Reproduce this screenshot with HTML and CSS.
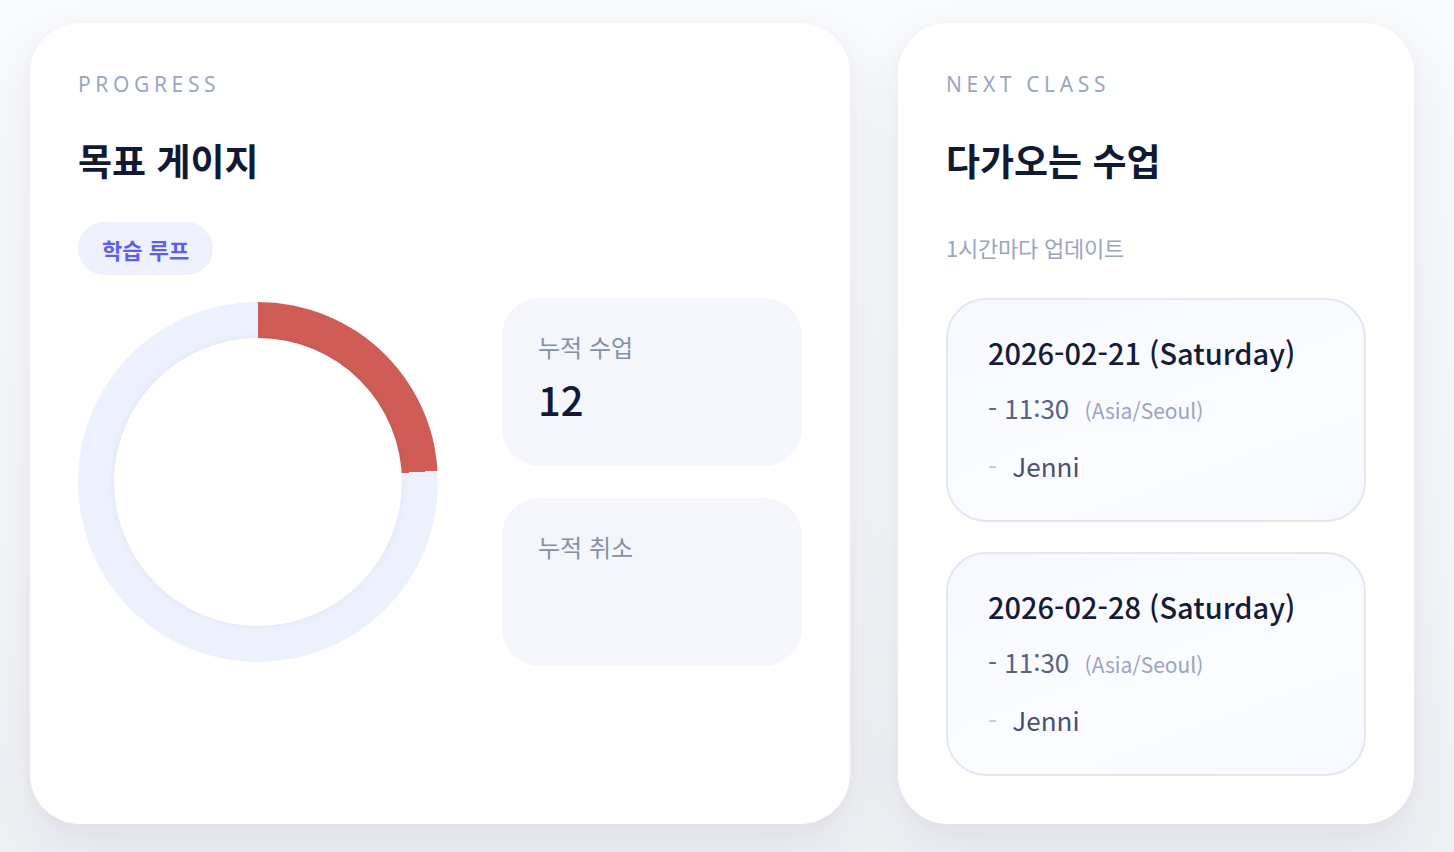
FILE: index.html
```html
<!DOCTYPE html>
<html lang="ko">
<head>
<meta charset="utf-8">
<link rel="stylesheet" href="styles.css">
</head>
<body>
<main class="dash">
  <section class="card progress">
    <p class="eyebrow">PROGRESS</p>
    <h2 class="title">목표 게이지</h2>
    <div class="pill">학습 루프</div>
    <div class="progress-row">
      <div class="donut" style="--pct: 24%">
        <div class="donut-hole"></div>
      </div>
      <div class="stats">
        <div class="stat">
          <span class="stat-label">누적 수업</span>
          <span class="stat-value">12</span>
        </div>
        <div class="stat">
          <span class="stat-label">누적 취소</span>
        </div>
      </div>
    </div>
  </section>
  <section class="card next">
    <p class="eyebrow">NEXT CLASS</p>
    <h2 class="title">다가오는 수업</h2>
    <p class="sub">1시간마다 업데이트</p>
    <div class="classes">
      <div class="class-item">
        <div class="class-date">2026-02-21 (Saturday)</div>
        <div class="class-time">- 11:30 <span class="tz">(Asia/Seoul)</span></div>
        <div class="class-teacher"><span class="dash-mark">-</span> Jenni</div>
      </div>
      <div class="class-item">
        <div class="class-date">2026-02-28 (Saturday)</div>
        <div class="class-time">- 11:30 <span class="tz">(Asia/Seoul)</span></div>
        <div class="class-teacher"><span class="dash-mark">-</span> Jenni</div>
      </div>
    </div>
  </section>
</main>
</body>
</html>
```
FILE: styles.css
```css
* { box-sizing: border-box; }
html, body { margin: 0; padding: 0; }
body {
  background: linear-gradient(180deg, #f9fafc 0%, #f5f6f9 60%, #eff0f4 100%);
  font-family: "Noto Sans CJK KR", "Noto Sans", sans-serif;
  color: #141a33;
  width: 1454px;
  height: 852px;
  overflow: hidden;
}
.dash {
  display: flex;
  gap: 48px;
  padding: 23px 40px 0 30px;
  align-items: stretch;
}
.card {
  background: #ffffff;
  border-radius: 50px;
  padding: 48px;
  box-shadow: 0 24px 60px rgba(40, 48, 90, 0.07), 0 4px 14px rgba(40, 48, 90, 0.03);
}
.progress { width: 820px; }
.next { width: 516px; }
.eyebrow {
  margin: 0;
  font-family: "Noto Sans", sans-serif;
  font-size: 21px;
  line-height: 26px;
  letter-spacing: 0.22em;
  color: #9aa6bf;
}
.title {
  margin: 41px 0 0;
  font-size: 37px;
  line-height: 44px;
  font-weight: 700;
  color: #121a33;
}
.pill {
  display: inline-flex;
  align-items: center;
  height: 53px;
  padding: 0 24px;
  margin-top: 40px;
  border-radius: 27px;
  background: #eef0fe;
  color: #5a5ff0;
  font-size: 22px;
  font-weight: 700;
}
.progress-row {
  display: flex;
  align-items: center;
  gap: 64px;
  margin-top: 23px;
}
.donut {
  width: 360px;
  height: 360px;
  border-radius: 50%;
  background: conic-gradient(#d05c56 0 var(--pct), #edf0fd var(--pct) 100%);
  display: flex;
  align-items: center;
  justify-content: center;
  flex: none;
}
.donut-hole {
  width: 288px;
  height: 288px;
  border-radius: 50%;
  background: #fff;
  box-shadow: 0 0 7px rgba(30, 40, 80, 0.06);
}
.stats {
  display: flex;
  flex-direction: column;
  gap: 32px;
  width: 300px;
}
.stat {
  height: 168px;
  border-radius: 38px;
  background: #f5f6fc;
  padding: 32px 36px;
  display: flex;
  flex-direction: column;
}
.stat-label {
  font-size: 24px;
  line-height: 34px;
  color: #8390a6;
}
.stat-value {
  margin-top: 10px;
  font-size: 40px;
  line-height: 50px;
  font-weight: 500;
  color: #141a33;
}
.sub {
  margin: 50px 0 0;
  font-size: 22px;
  line-height: 30px;
  color: #9aa5c2;
  letter-spacing: -0.01em;
}
.classes {
  display: flex;
  flex-direction: column;
  gap: 30px;
  margin-top: 36px;
}
.class-item {
  border: 2px solid #e3e6f3;
  border-radius: 40px;
  background: linear-gradient(160deg, #f7f8fe 0%, #fbfcff 60%, #f8f9fe 100%);
  padding: 32px 40px 34px;
  display: flex;
  flex-direction: column;
  gap: 16px;
}
.class-date {
  font-size: 29px;
  line-height: 40px;
  font-weight: 500;
  color: #171c36;
}
.class-time {
  font-size: 26px;
  line-height: 40px;
  color: #5a6180;
}
.tz {
  font-size: 21px;
  color: #9aa3c0;
  margin-left: 8px;
}
.class-teacher {
  font-size: 26px;
  line-height: 40px;
  color: #4a5070;
}
.dash-mark {
  color: #c3c8dc;
  margin-right: 8px;
}
```
